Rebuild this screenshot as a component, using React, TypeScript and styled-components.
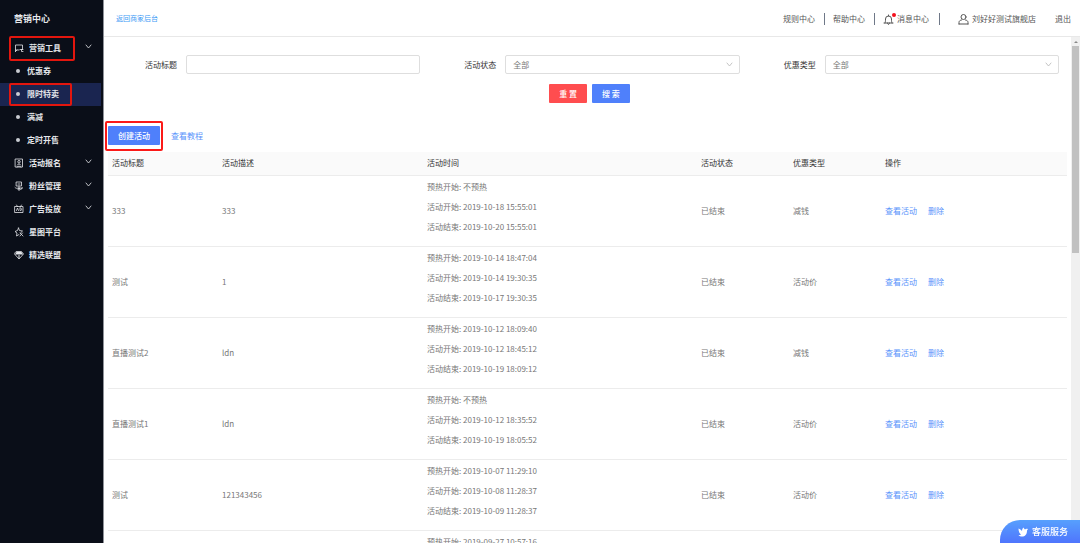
import React from 'react';
import styled, { createGlobalStyle, css } from 'styled-components';

const GlobalStyle = createGlobalStyle`
  *, *::before, *::after { box-sizing: border-box; }
  body {
    margin: 0;
    background: #fff;
    color: #555;
    font-family: "Noto Sans CJK SC", "Liberation Sans", sans-serif;
    font-size: 8px;
    line-height: 12px;
  }
  button, input, select { font: inherit; color: inherit; }
  a { color: inherit; text-decoration: none; }
  ul, p { margin: 0; padding: 0; list-style: none; }
`;

const Shell = styled.div`
  display: flex;
  height: 100vh;
  overflow: hidden;
`;

const Sidebar = styled.nav`
  flex: none;
  width: 104px;
  padding-right: 2px;
  background: #0a0e18;
  border-right: 1px solid #8f9299;
  color: #e4e6ea;
  font-weight: 700;
`;

const SidebarTitle = styled.div`
  height: 37px;
  padding-left: 14px;
  font-size: 9px;
  line-height: 37px;
`;

const highlight = css`
  &::after {
    content: "";
    position: absolute;
    border: 2px solid #e3160e;
    border-radius: 2px;
    pointer-events: none;
  }
`;

const NavItem = styled.li<{ $active?: boolean; $marked?: boolean }>`
  position: relative;
  background: ${(p) => (p.$active ? '#1a2550' : 'transparent')};
  ${(p) => p.$marked && highlight}
  &::after { inset: 0 29px 0 9px; }
`;

const GroupItem = styled(NavItem)`
  &::after { inset: -1px 26px -1px 9px; }
`;

const NavLink = styled.a`
  display: flex;
  align-items: center;
  height: 23px;
  padding: 0 9px 1px 14px;
  > span { flex: 1; margin-left: 5px; }
  > svg:last-child { margin-bottom: 3px; }
`;

const SubLink = styled(NavLink)`
  &::before {
    content: "";
    width: 4px;
    height: 4px;
    margin: 0 2px;
    border-radius: 50%;
    background: #c9ccd2;
  }
`;

const Icon = styled.svg<{ $size?: number }>`
  flex: none;
  width: ${(p) => p.$size ?? 10}px;
  height: ${(p) => p.$size ?? 10}px;
  fill: none;
  stroke: currentColor;
  stroke-linecap: round;
  stroke-linejoin: round;
`;

const Main = styled.div`
  flex: 1;
  min-width: 0;
  display: flex;
  flex-direction: column;
`;

const Header = styled.header`
  flex: none;
  display: flex;
  align-items: center;
  justify-content: space-between;
  height: 37px;
  padding: 0 9px 0 12px;
  border-bottom: 1px solid #e8e8e8;
`;

const BackLink = styled.a`
  color: #3f9cf5;
  font-size: 7px;
`;

const HeaderLinks = styled.div`
  display: flex;
  align-items: center;
  padding-top: 2px;
`;

const HeaderLink = styled.a`
  display: flex;
  align-items: center;
  gap: 3px;
`;

const Divider = styled.span<{ $wide?: boolean }>`
  width: 1px;
  height: 12px;
  margin: 0 ${(p) => (p.$wide ? 18 : 8)}px 0 ${(p) => (p.$wide ? 10 : 9)}px;
  background: #6f7888;
`;

const BellWrap = styled.span`
  position: relative;
  display: flex;
  &::after {
    content: "";
    position: absolute;
    top: -1px;
    right: -2px;
    width: 4px;
    height: 4px;
    border-radius: 50%;
    background: #f5101c;
  }
`;

const LogoutLink = styled.a`
  margin-left: 19px;
`;

const Body = styled.div`
  flex: 1;
  min-height: 0;
  display: flex;
`;

const Content = styled.main`
  flex: 1;
  min-width: 0;
  overflow-y: auto;
  scrollbar-width: none;
  padding: 18px 5px 0 4px;
`;

const ScrollTrack = styled.div`
  flex: none;
  width: 9px;
  padding: 0 1px;
  background: #f0f0f0;
`;

const ScrollArrow = styled.div`
  display: flex;
  align-items: center;
  justify-content: center;
  height: 9px;
  &::before {
    content: "";
    border: 2px solid transparent;
    border-top: 0;
    border-bottom-color: #888;
  }
`;

const ScrollThumb = styled.div`
  height: 41%;
  background: #c1c1c1;
`;

const FilterRow = styled.div`
  display: grid;
  grid-template-columns: repeat(3, 1fr);
`;

const Field = styled.div`
  display: flex;
  align-items: center;
  padding-right: 7px;
  > label {
    flex: none;
    width: 78px;
    padding-right: 9px;
    text-align: right;
    color: #333;
  }
`;

const controlBox = css`
  width: 100%;
  height: 19px;
  padding: 0 7px;
  border: 1px solid #dedede;
  border-radius: 2px;
  background: #fff;
  color: #777;
  outline: none;
`;

const TextInput = styled.input`
  ${controlBox}
`;

const SelectWrap = styled.div`
  position: relative;
  flex: 1;
  > select { ${controlBox} padding: 0 3px; appearance: none; display: block; }
  > svg {
    position: absolute;
    right: 7px;
    top: 6px;
    color: #b5b5b5;
    pointer-events: none;
  }
`;

const StatusSelect = styled.select`
  && { padding: 0 7px; }
`;

const Actions = styled.div`
  display: flex;
  justify-content: center;
  gap: 5px;
  padding: 10px 0 0 5px;
`;

const Button = styled.button<{ $tone?: 'danger' }>`
  height: 19px;
  padding: 0 10px;
  border: 0;
  border-radius: 1px;
  background: ${(p) => (p.$tone === 'danger' ? '#ff4d4f' : '#4f80fb')};
  color: #fff;
  font-weight: 500;
  line-height: 19px;
  white-space: pre;
`;

const Toolbar = styled.div`
  display: flex;
  align-items: center;
  gap: 11px;
  padding: 23px 0 7px;
`;

const CreateWrap = styled.div`
  position: relative;
  ${highlight}
  &::after {
    inset: -5px -3px -6px -3px;
    border-color: #fb1a18;
  }
`;

const TextLink = styled.a`
  color: #5a93fb;
  & + & { margin-left: 11px; }
`;

const Table = styled.table`
  width: 100%;
  table-layout: fixed;
  border-collapse: separate;
  border-spacing: 0;
  th, td {
    padding: 5px 4px;
    border-bottom: 1px solid #ececec;
    text-align: left;
    vertical-align: middle;
  }
  th {
    padding-bottom: 6px;
    background: #fafafa;
    color: #333;
    font-weight: 400;
  }
  td { color: #777; }
  td > p { margin-bottom: 8px; }
`;

const ServiceButton = styled.button`
  position: fixed;
  right: 0;
  bottom: 0;
  display: flex;
  align-items: center;
  gap: 4px;
  height: 23px;
  padding: 0 12px 0 18px;
  border: 0;
  border-radius: 20px 0 0 0;
  background: linear-gradient(#57a0fd, #4f75fd);
  color: #fff;
  font-size: 9px;
  font-weight: 500;
`;

const Chevron = ({ size = 7 }: { size?: number }) => (
  <Icon $size={size} viewBox="0 0 14 14" strokeWidth="1.6" aria-hidden="true">
    <path d="M2 4l5 6 5-6" />
  </Icon>
);

const icons = {
  tools: <path d="M3 17V4h14v9M3 14h7M3 17l3-3M12 13h6M15 13v4h3" />,
  signup: <path d="M3 2h14v16H3zM10 5a2.500 2.500 0 1 1 0 5 2.500 2.500 0 0 1 0-5M6.500 14c1-3 6-3 7 0M6 18l4-2 4 2" />,
  fans: <path d="M5 2h10v8H5zM8 6h4M2 13c2 2 4 2 6 1h9M10 10v4M9 15h3v3H9zM16 14l-2 3" />,
  ads: <path d="M2 5h16v12H2zM5 2l2 3M15 2l-2 3M5 13l2-5 2 5M12 8v5h1.500c2.500 0 2.500-5 0-5z" />,
  star: <path d="M9 2l2 5 6 1-4 4M9 2L7 7l-5 2 4 3-1 6 5-3M12 12l6 6M17 12l-5 6" />,
  union: (
    <>
      <path d="M5 3h10l4 5-9 10L1 8z" />
      <path d="M5 4h10l3 5H2zM9 10h2v7H9z" fill="currentColor" stroke="none" />
    </>
  ),
};

type IconName = keyof typeof icons;

const NavIcon = ({ name }: { name: IconName }) => (
  <Icon viewBox="0 0 20 20" strokeWidth="1.600" aria-hidden="true">{icons[name]}</Icon>
);

const subItems = ['优惠券', '限时特卖', '满减', '定时开售'];

const groups: { label: string; icon: IconName; expandable: boolean }[] = [
  { label: '活动报名', icon: 'signup', expandable: true },
  { label: '粉丝管理', icon: 'fans', expandable: true },
  { label: '广告投放', icon: 'ads', expandable: true },
  { label: '星图平台', icon: 'star', expandable: false },
  { label: '精选联盟', icon: 'union', expandable: false },
];

const columns = [
  { title: '活动标题', width: 110 },
  { title: '活动描述', width: 205 },
  { title: '活动时间', width: 274 },
  { title: '活动状态', width: 92 },
  { title: '优惠类型', width: 92 },
  { title: '操作', width: 186 },
];

const rows = [
  { title: '333', desc: '333', warm: '不预热', start: '2019-10-18 15:55:01', end: '2019-10-20 15:55:01', type: '减钱' },
  { title: '测试', desc: '1', warm: '2019-10-14 18:47:04', start: '2019-10-14 19:30:35', end: '2019-10-17 19:30:35', type: '活动价' },
  { title: '直播测试2', desc: 'ldn', warm: '2019-10-12 18:09:40', start: '2019-10-12 18:45:12', end: '2019-10-19 18:09:12', type: '减钱' },
  { title: '直播测试1', desc: 'ldn', warm: '不预热', start: '2019-10-12 18:35:52', end: '2019-10-19 18:05:52', type: '活动价' },
  { title: '测试', desc: '121343456', warm: '2019-10-07 11:29:10', start: '2019-10-08 11:28:37', end: '2019-10-09 11:28:37', type: '活动价' },
  { title: '测试', desc: '1', warm: '2019-09-27 10:57:16', start: '2019-09-27 11:57:16', end: '2019-09-28 10:57:16', type: '活动价' },
];

const SelectField = ({ id, label }: { id: string; label: string }) => (
  <Field>
    <label htmlFor={id}>{label}</label>
    <SelectWrap>
      <StatusSelect id={id}><option>全部</option></StatusSelect>
      <Chevron />
    </SelectWrap>
  </Field>
);

export default function App() {
  return (
    <>
      <GlobalStyle />
      <Shell>
        <Sidebar>
          <SidebarTitle>营销中心</SidebarTitle>
          <ul>
            <GroupItem $marked>
              <NavLink href="#tools"><NavIcon name="tools" /><span>营销工具</span><Chevron /></NavLink>
            </GroupItem>
            {subItems.map((label) => (
              <NavItem key={label} $active={label === '限时特卖'} $marked={label === '限时特卖'}>
                <SubLink href="#sub"><span>{label}</span></SubLink>
              </NavItem>
            ))}
            {groups.map((g) => (
              <NavItem key={g.label}>
                <NavLink href="#group">
                  <NavIcon name={g.icon} />
                  <span>{g.label}</span>
                  {g.expandable && <Chevron />}
                </NavLink>
              </NavItem>
            ))}
          </ul>
        </Sidebar>
        <Main>
          <Header>
            <BackLink href="#back">返回商家后台</BackLink>
            <HeaderLinks>
              <HeaderLink href="#rules">规则中心</HeaderLink>
              <Divider />
              <HeaderLink href="#help">帮助中心</HeaderLink>
              <Divider />
              <HeaderLink href="#messages">
                <BellWrap>
                  <Icon $size={11} viewBox="0 0 22 22" strokeWidth="2" aria-hidden="true">
                    <path d="M2 18h18M4 18c1-2 1-4 1-8a6 6 0 0 1 12 0c0 4 0 6 1 8M11 4V2M9 18c0 4 4 4 4 0" />
                  </Icon>
                </BellWrap>
                消息中心
              </HeaderLink>
              <Divider $wide />
              <HeaderLink href="#account">
                <Icon $size={11} viewBox="0 0 22 22" strokeWidth="2" aria-hidden="true">
                  <circle cx="11" cy="6" r="5" />
                  <path d="M2 20v-3c0-3 2-4.500 5-5M20 20v-3c0-3-2-4.500-5-5M2 20h18" />
                </Icon>
                刘好好测试旗舰店
              </HeaderLink>
              <LogoutLink href="#logout">退出</LogoutLink>
            </HeaderLinks>
          </Header>
          <Body>
            <Content>
              <form onSubmit={(e) => e.preventDefault()}>
                <FilterRow>
                  <Field>
                    <label htmlFor="title">活动标题</label>
                    <TextInput id="title" type="text" />
                  </Field>
                  <SelectField id="status" label="活动状态" />
                  <SelectField id="type" label="优惠类型" />
                </FilterRow>
                <Actions>
                  <Button type="reset" $tone="danger">重 置</Button>
                  <Button type="submit">搜 索</Button>
                </Actions>
              </form>
              <Toolbar>
                <CreateWrap><Button type="button">创建活动</Button></CreateWrap>
                <TextLink href="#tutorial">查看教程</TextLink>
              </Toolbar>
              <Table>
                <colgroup>
                  {columns.map((c) => <col key={c.title} width={c.width} />)}
                </colgroup>
                <thead>
                  <tr>{columns.map((c) => <th key={c.title} scope="col">{c.title}</th>)}</tr>
                </thead>
                <tbody>
                  {rows.map((r) => (
                    <tr key={r.start}>
                      <td>{r.title}</td>
                      <td>{r.desc}</td>
                      <td>
                        <p>预热开始: {r.warm}</p>
                        <p>活动开始: {r.start}</p>
                        <p>活动结束: {r.end}</p>
                      </td>
                      <td>已结束</td>
                      <td>{r.type}</td>
                      <td>
                        <TextLink href="#view">查看活动</TextLink>
                        <TextLink href="#delete">删除</TextLink>
                      </td>
                    </tr>
                  ))}
                </tbody>
              </Table>
            </Content>
            <ScrollTrack aria-hidden="true">
              <ScrollArrow />
              <ScrollThumb />
            </ScrollTrack>
          </Body>
        </Main>
      </Shell>
      <ServiceButton type="button">
        <Icon viewBox="0 0 20 20" aria-hidden="true">
          <path fill="currentColor" stroke="none" d="M1 3c3 1 5 3 7 5 0-3 1-5 3-7 1 2 2 3 3 4 2-2 3-2 6-1l-2 3c0 8-4 12-10 12-3 0-5-1-7-3 2 0 4 0 5-1C3 13 1 9 1 3z" />
        </Icon>
        客服服务
      </ServiceButton>
    </>
  );
}
